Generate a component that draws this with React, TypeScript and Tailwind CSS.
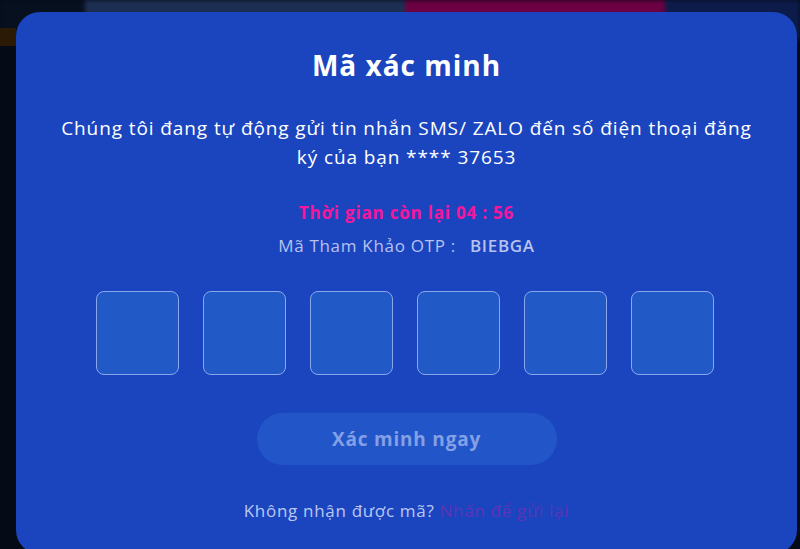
const FONT = "font-['Open_Sans',_'Noto_Sans',_sans-serif]";

const OtpBox = () => (
  <div className="h-[84px] w-[83px] rounded-lg border border-[#8aa6ee] bg-[#2159c6]" />
);

const App = () => {
  return (
    <div className={`relative h-[549px] w-[800px] overflow-hidden bg-[#050b16] ${FONT}`}>
      {/* blurred page behind the modal */}
      <div className="absolute inset-x-0 top-0 flex h-[40px] blur-[2px]">
        <div className="w-[85px] bg-[#07101f]" />
        <div className="w-[320px] bg-[#1c2f52]" />
        <div className="w-[260px] bg-[#6b0042]" />
        <div className="flex-1 bg-[#0d1b4a]" />
      </div>
      <div className="absolute left-0 top-[28px] h-[18px] w-[16px] bg-[#2b1b06]" />

      <div className="relative ml-[16px] mt-[12px] flex h-[542px] w-[781px] flex-col items-center rounded-[24px] bg-[#1b45bf] pt-[37px] text-center">
        <h1 className="text-[28px] leading-[32px] font-bold tracking-[1px] text-white">Mã xác minh</h1>

        <p className="mt-[33px] text-[19px] leading-[29px] tracking-[0.9px] text-white">
          Chúng tôi đang tự động gửi tin nhắn SMS/ ZALO đến số điện thoại đăng
          <br />
          ký của bạn **** 37653
        </p>

        <p className="mt-[29px] text-[17px] leading-[24px] font-bold tracking-[0.8px] text-[#f7169b]">
          Thời gian còn lại 04 : 56
        </p>

        <p className="mt-[9px] flex gap-[14px] text-[17px] leading-[24px] tracking-[0.7px] text-[#b7c2ef]">
          <span>Mã Tham Khảo OTP :</span>
          <span className="font-semibold">BIEBGA</span>
        </p>

        <div className="mt-[33px] -ml-[3px] flex gap-[24px]">
          {Array.from({ length: 6 }).map((_, i) => (
            <OtpBox key={i} />
          ))}
        </div>

        <button className="mt-[38px] h-[52px] w-[300px] rounded-full bg-[#2256c8] text-[19px] font-bold tracking-[0.8px] text-[#84a0e6]">
          Xác minh ngay
        </button>

        <p className="mt-[34px] text-[17px] leading-[24px] tracking-[0.7px] text-[#bcc8f2]">
          Không nhận được mã? <span className="text-[#5f33b6]">Nhấn để gửi lại</span>
        </p>
      </div>
    </div>
  );
};

export default App;
